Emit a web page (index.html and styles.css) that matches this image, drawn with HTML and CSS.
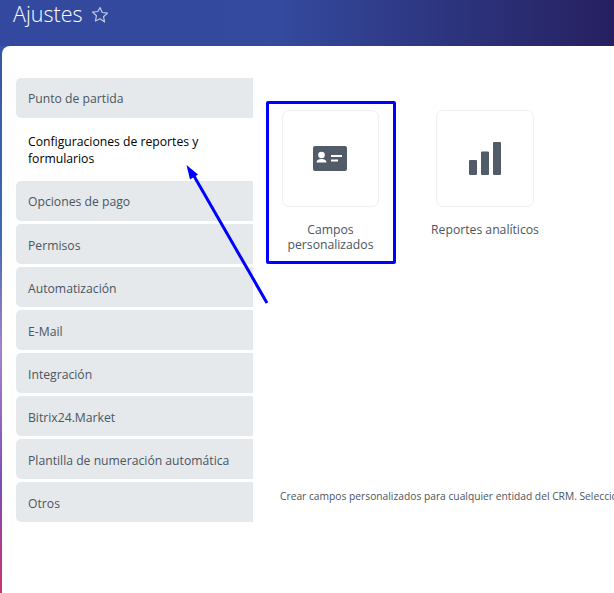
FILE: index.html
```html
<!DOCTYPE html>
<html lang="es">
<head>
<meta charset="utf-8">
<title>Ajustes</title>
<link rel="stylesheet" href="styles.css">
</head>
<body>
<div class="page">
  <header class="topbar">
    <h1 class="title">Ajustes</h1>
    <svg class="star" width="18" height="18" viewBox="0 0 18 18"><path d="M9 1.600l2.200 4.900 5.300.6-4 3.600 1.100 5.300L9 12.800l-4.600 2.200 1.100-5.300-4-3.600 5.300-.6z" fill="none" stroke="#c3c9dc" stroke-width="1.200" stroke-linejoin="round"/></svg>
  </header>
  <main class="card">
    <nav class="menu">
      <a class="item item-high">Punto de partida</a>
      <a class="item active">Configuraciones de reportes y formularios</a>
      <a class="item item-high">Opciones de pago</a>
      <a class="item">Permisos</a>
      <a class="item">Automatización</a>
      <a class="item">E-Mail</a>
      <a class="item">Integración</a>
      <a class="item">Bitrix24.Market</a>
      <a class="item">Plantilla de numeración automática</a>
      <a class="item">Otros</a>
    </nav>
    <section class="content">
      <div class="tiles">
        <div class="tile highlighted">
          <div class="tile-box">
            <svg width="34" height="25" viewBox="0 0 34 25"><rect width="34" height="25" rx="2" fill="#525c69"/><circle cx="8.500" cy="9" r="3.300" fill="#fff"/><path d="M3.500 16.500c0-2.500 2.500-3.500 5-3.500s5 1 5 3.500z" fill="#fff"/><rect x="18" y="9" width="11" height="2" fill="#fff"/><rect x="18" y="13.500" width="7" height="2" fill="#fff"/></svg>
          </div>
          <div class="tile-label">Campos personalizados</div>
        </div>
        <div class="tile">
          <div class="tile-box">
            <svg width="32" height="33" viewBox="0 0 32 33"><rect x="0" y="18" width="8" height="15" rx="1" fill="#525c69"/><rect x="12" y="9.500" width="8" height="23.500" rx="1" fill="#525c69"/><rect x="24" y="0" width="8" height="33" rx="1" fill="#525c69"/></svg>
          </div>
          <div class="tile-label">Reportes analíticos</div>
        </div>
      </div>
      <p class="hint">Crear campos personalizados para cualquier entidad del CRM. Seleccione una entidad y agregue los campos necesarios.</p>
    </section>
  </main>
  <svg class="arrow" width="614" height="593" viewBox="0 0 614 593"><path d="M267 303L194 176" stroke="#0000ff" stroke-width="3" fill="none"/><path d="M186.500 165l11.500 9.500-8 5z" fill="#0000ff"/></svg>
</div>
</body>
</html>
```
FILE: styles.css
```css
* { box-sizing: border-box; }
html, body { margin: 0; height: 100%; overflow: hidden; }
body { font-family: "Open Sans", "Liberation Sans", sans-serif; }
.page {
  position: relative;
  width: 614px;
  height: 593px;
  overflow: hidden;
  padding-left: 2px;
  display: flex;
  flex-direction: column;
  background: linear-gradient(180deg, #3551a3 0, #3a6ab0 230px, #a583c8 350px, #7d4db5 483px, #b03b90 550px, #cc3366 593px);
}
.topbar {
  height: 46px;
  flex: none;
  margin-left: -2px;
  padding-left: 13px;
  display: flex;
  align-items: flex-start;
  gap: 8px;
  background: linear-gradient(90deg, #33499f 0%, #344a9e 45%, #262060 100%);
}
.title {
  margin: 0;
  font-size: 21.500px;
  font-weight: 300;
  line-height: 28px;
  color: #fff;
}
.star { margin-top: 6px; }
.card {
  flex: 1;
  display: flex;
  background: #fff;
  border-top-left-radius: 8px;
  padding: 32px 0 0 14px;
  overflow: hidden;
}
.menu {
  width: 237px;
  flex: none;
  display: flex;
  flex-direction: column;
}
.item {
  display: block;
  height: 40px;
  padding: 13px 12px 10px;
  margin-bottom: 3px;
  font-size: 12.200px;
  line-height: 17px;
  color: #4c5561;
  background: #e5e9eb;
  border-radius: 5px 0 0 5px;
}
.item-high { padding-top: 12px; }
.item.active {
  height: 63px;
  background: #fff;
  color: #000;
  margin-top: -3px;
  margin-bottom: 0;
  padding: 15px 12px 12px;
}
.content {
  flex: 1;
  min-width: 0;
  padding-left: 29px;
  position: relative;
}
.tiles {
  display: flex;
  gap: 57px;
  padding-top: 32px;
}
.tile {
  width: 98px;
  position: relative;
}
.tile.highlighted { width: 97px; }
.tile.highlighted .tile-box { padding-right: 1px; }
.tile.highlighted::before {
  content: "";
  box-sizing: border-box;
  position: absolute;
  left: -16px;
  top: -9px;
  width: 130px;
  height: 163px;
  border: 3px solid #0000ff;
  border-radius: 2px;
}
.tile-box {
  height: 97px;
  border: 1px solid #eef0f2;
  border-radius: 7px;
  display: flex;
  align-items: center;
  justify-content: center;
}
.tile-label {
  margin-top: 15px;
  text-align: center;
  font-size: 12.200px;
  line-height: 15px;
  color: #4c5561;
}
.tile:nth-child(2) .tile-label { white-space: nowrap; margin-left: -10px; margin-right: -10px; }
.hint {
  position: absolute;
  left: 27px;
  top: 411px;
  margin: 0;
  white-space: nowrap;
  font-size: 10.250px;
  line-height: 15px;
  color: #4c5561;
}
.arrow { position: absolute; left: 0; top: 0; pointer-events: none; }
```
